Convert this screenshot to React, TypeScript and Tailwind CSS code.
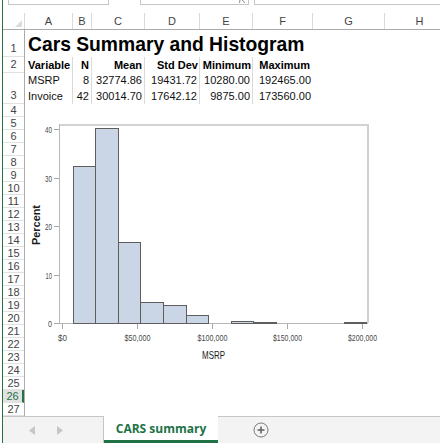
import React from "react";

const cols = [
  { l: "A", w: 48 },
  { l: "B", w: 19 },
  { l: "C", w: 53 },
  { l: "D", w: 55 },
  { l: "E", w: 53 },
  { l: "F", w: 60 },
  { l: "G", w: 72 },
  { l: "H", w: 70 },
];

const bars = [32.4, 40.2, 16.7, 4.3, 3.7, 1.65, 0, 0.4, 0.2, 0, 0, 0, 0.2];

const X = (v: number) => 61.5 + (v / 50000) * 75.2;
const Y = (p: number) => 323 - p * 4.85;

function Chart() {
  const xt = [
    { v: 0, t: "$0", w: 9 },
    { v: 50000, t: "$50,000", w: 26 },
    { v: 100000, t: "$100,000", w: 30 },
    { v: 150000, t: "$150,000", w: 29 },
    { v: 200000, t: "$200,000", w: 29 },
  ];
  const yt = [
    { p: 0, t: "0", w: 4 },
    { p: 10, t: "10", w: 6.5 },
    { p: 20, t: "20", w: 7 },
    { p: 30, t: "30", w: 7 },
    { p: 40, t: "40", w: 7 },
  ];
  return (
    <svg width={415} height={312} viewBox="25 104 415 312" className="block">
      <line x1={59} y1={125} x2={368} y2={125} stroke="#d2d2d2" strokeWidth={2} />
      <line x1={368} y1={124} x2={368} y2={323} stroke="#d2d2d2" strokeWidth={2} />
      <line x1={59.5} y1={124} x2={59.5} y2={323.5} stroke="#b8b8b8" strokeWidth={1} />
      <line x1={59} y1={323.5} x2={368} y2={323.5} stroke="#b8b8b8" strokeWidth={1} />
      {bars.map((p, i) => {
        if (p <= 0) return null;
        const x1 = Math.round(X(7500 + i * 15000)) + 0.5;
        const x2 = Math.round(X(22500 + i * 15000)) + 0.5;
        const y = Math.round(Y(p)) + 0.5;
        return (
          <rect
            key={i}
            x={x1}
            y={y}
            width={x2 - x1}
            height={323.5 - y}
            fill="#cad5e6"
            stroke="#5e5e5e"
            strokeWidth={1}
          />
        );
      })}
      {yt.map((t) => {
        const y = Math.round(Y(t.p)) + 0.5;
        return (
          <g key={t.t}>
            <line x1={54} y1={y} x2={59} y2={y} stroke="#a8a8a8" strokeWidth={1} />
            <text
              x={52}
              y={y + 3.5}
              textAnchor="end"
              fontSize={9.5}
              fill="#4a4a4a"
              fontFamily="Liberation Sans, Arial, sans-serif"
              textLength={t.w}
              lengthAdjust="spacingAndGlyphs"
            >
              {t.t}
            </text>
          </g>
        );
      })}
      {xt.map((t) => {
        const x = Math.round(X(t.v)) + 0.5;
        return (
          <g key={t.t}>
            <line x1={x} y1={324} x2={x} y2={329} stroke="#a8a8a8" strokeWidth={1} />
            <text
              x={x - t.w / 2}
              y={341}
              fontSize={9.5}
              fill="#4a4a4a"
              fontFamily="Liberation Sans, Arial, sans-serif"
              textLength={t.w}
              lengthAdjust="spacingAndGlyphs"
            >
              {t.t}
            </text>
          </g>
        );
      })}
      <text
        x={202}
        y={358.5}
        fontSize={11.5}
        fill="#1a1a1a"
        fontFamily="Liberation Sans, Arial, sans-serif"
        textLength={23}
        lengthAdjust="spacingAndGlyphs"
      >
        MSRP
      </text>
      <text
        transform="translate(39.5 245) rotate(-90)"
        fontSize={10}
        fontWeight="bold"
        fill="#1a1a1a"
        fontFamily="Liberation Sans, Arial, sans-serif"
        textLength={40}
        lengthAdjust="spacingAndGlyphs"
      >
        Percent
      </text>
    </svg>
  );
}

const rowDefs: { n: number; h: number }[] = [
  { n: 1, h: 27 },
  { n: 2, h: 16 },
  { n: 3, h: 31 },
  ...Array.from({ length: 24 }, (_, i) => ({ n: i + 4, h: 13 })),
];

export default function App() {
  const cell = "border-r border-[#dadada]";
  return (
    <div className="w-[440px] h-[443px] bg-white overflow-hidden flex font-['Liberation_Sans',Arial,sans-serif]">
      <div className="w-[2px] shrink-0 bg-white" />
      <div className="w-[1px] shrink-0 bg-[#217346]" />
      <div className="flex-1 flex flex-col min-w-0">
        <div className="h-[13px] shrink-0 flex items-start">
          <div className="ml-[5px] w-[101px] h-[5px] border-x border-b border-[#c6c6c6]" />
          <div className="ml-[31px] w-[109px] h-[5px] border-x border-b border-[#c6c6c6] relative">
            <svg width={6} height={4} viewBox="0 0 6 4" className="absolute right-[3px] top-0">
              <path d="M1 0 L0.5 3 M3 0 Q5 1 5.5 3" stroke="#8a8a8a" strokeWidth={1} fill="none" />
            </svg>
          </div>
          <div className="ml-[5px] flex-1 h-[5px] border-l border-b border-[#c6c6c6]" />
        </div>
        <div className="h-[17px] shrink-0 flex border-b border-[#ababab]">
          <div className="w-[22px] shrink-0 border-r border-[#dadada] flex items-end justify-end pr-[2px] pb-[2px]">
            <svg width={7} height={7} viewBox="0 0 7 7">
              <polygon points="7,0 7,7 0,7" fill="#dcdcdc" />
            </svg>
          </div>
          {cols.map((c) => (
            <div
              key={c.l}
              style={{ width: c.w }}
              className="shrink-0 border-r border-[#dadada] flex items-center justify-center text-[11px] text-[#444]"
            >
              {c.l}
            </div>
          ))}
        </div>
        <div className="flex shrink-0">
          <div className="w-[22px] shrink-0 flex flex-col border-r border-[#ababab]">
            {rowDefs.map((r) => {
              const sel = r.n === 26;
              return (
                <div
                  key={r.n}
                  style={{ height: r.h }}
                  className={
                    "flex justify-center border-b border-[#e1e1e1] text-[11px] leading-none " +
                    (r.n <= 3 ? "items-end pb-[2px] " : "items-center ") +
                    (sel
                      ? "bg-[#e1e1e1] text-[#217346] border-r-2 border-r-[#217346]"
                      : "text-[#444]")
                  }
                >
                  {r.n}
                </div>
              );
            })}
          </div>
          <div className="flex-1 flex flex-col min-w-0 text-[11px] text-[#111] leading-none">
            <div className="h-[27px] flex items-end pb-[3px] pl-[3px]">
              <span className="text-[19.3px] font-bold text-black whitespace-nowrap leading-none">
                Cars Summary and Histogram
              </span>
            </div>
            <div className="h-[16px] flex font-bold text-black">
              <div className={"w-[48px] flex items-center pl-[3px] " + cell}>Variable</div>
              <div className={"w-[19px] flex items-center justify-end pr-[2px] " + cell}>N</div>
              <div className={"w-[53px] flex items-center justify-end pr-[2px] " + cell}>Mean</div>
              <div className={"w-[55px] flex items-center justify-end pr-[1px] whitespace-nowrap " + cell}>Std Dev</div>
              <div className={"w-[53px] flex items-center justify-end pr-[1px] whitespace-nowrap " + cell}>Minimum</div>
              <div className="w-[60px] flex items-center justify-end pr-[3px]">Maximum</div>
            </div>
            <div className="h-[31px] flex">
              {[
                { w: 48, a: "left", v: ["MSRP", "Invoice"] },
                { w: 19, a: "right", v: ["8", "42"] },
                { w: 53, a: "right", v: ["32774.86", "30014.70"] },
                { w: 55, a: "right", v: ["19431.72", "17642.12"] },
                { w: 53, a: "right", v: ["10280.00", "9875.00"] },
                { w: 60, a: "right", v: ["192465.00", "173560.00"], last: true },
              ].map((c, i) => (
                <div
                  key={i}
                  style={{ width: c.w }}
                  className={
                    "flex flex-col justify-end pb-[1px] gap-[3px] " +
                    (c.a === "left" ? "items-start pl-[3px] " : "items-end pr-[2px] ") +
                    (c.last ? "" : cell)
                  }
                >
                  <div className="h-[13px] flex items-center">{c.v[0]}</div>
                  <div className="h-[13px] flex items-center">{c.v[1]}</div>
                </div>
              ))}
            </div>
            <div className="h-[312px]">
              <Chart />
            </div>
          </div>
        </div>
        <div className="flex-1 flex bg-[#f3f3f3] border-t border-[#c6c6c6]">
          <div className="w-[100px] shrink-0 flex items-center">
            <svg width={6} height={9} viewBox="0 0 6 9" className="ml-[26px]">
              <polygon points="6,0 6,9 0,4.5" fill="#c6c6c6" />
            </svg>
            <svg width={6} height={9} viewBox="0 0 6 9" className="ml-[22px]">
              <polygon points="0,0 0,9 6,4.5" fill="#c6c6c6" />
            </svg>
          </div>
          <div className="w-[115px] shrink-0 bg-white border-l border-[#c6c6c6] -mt-[1px] flex flex-col">
            <div className="flex-1 flex items-center justify-center pt-[1px] text-[12px] font-bold text-[#217346] font-['Open_Sans',sans-serif]">
              CARS summary
            </div>
            <div className="h-[3px] bg-[#217346]" />
          </div>
          <div className="flex-1 flex items-center">
            <svg width={16} height={16} viewBox="0 0 16 16" className="ml-[35px]">
              <circle cx={8} cy={8} r={7} fill="none" stroke="#7a7a7a" strokeWidth={1} />
              <line x1={4.5} y1={8} x2={11.5} y2={8} stroke="#666" strokeWidth={1.6} />
              <line x1={8} y1={4.5} x2={8} y2={11.5} stroke="#666" strokeWidth={1.6} />
            </svg>
          </div>
        </div>
      </div>
    </div>
  );
}
